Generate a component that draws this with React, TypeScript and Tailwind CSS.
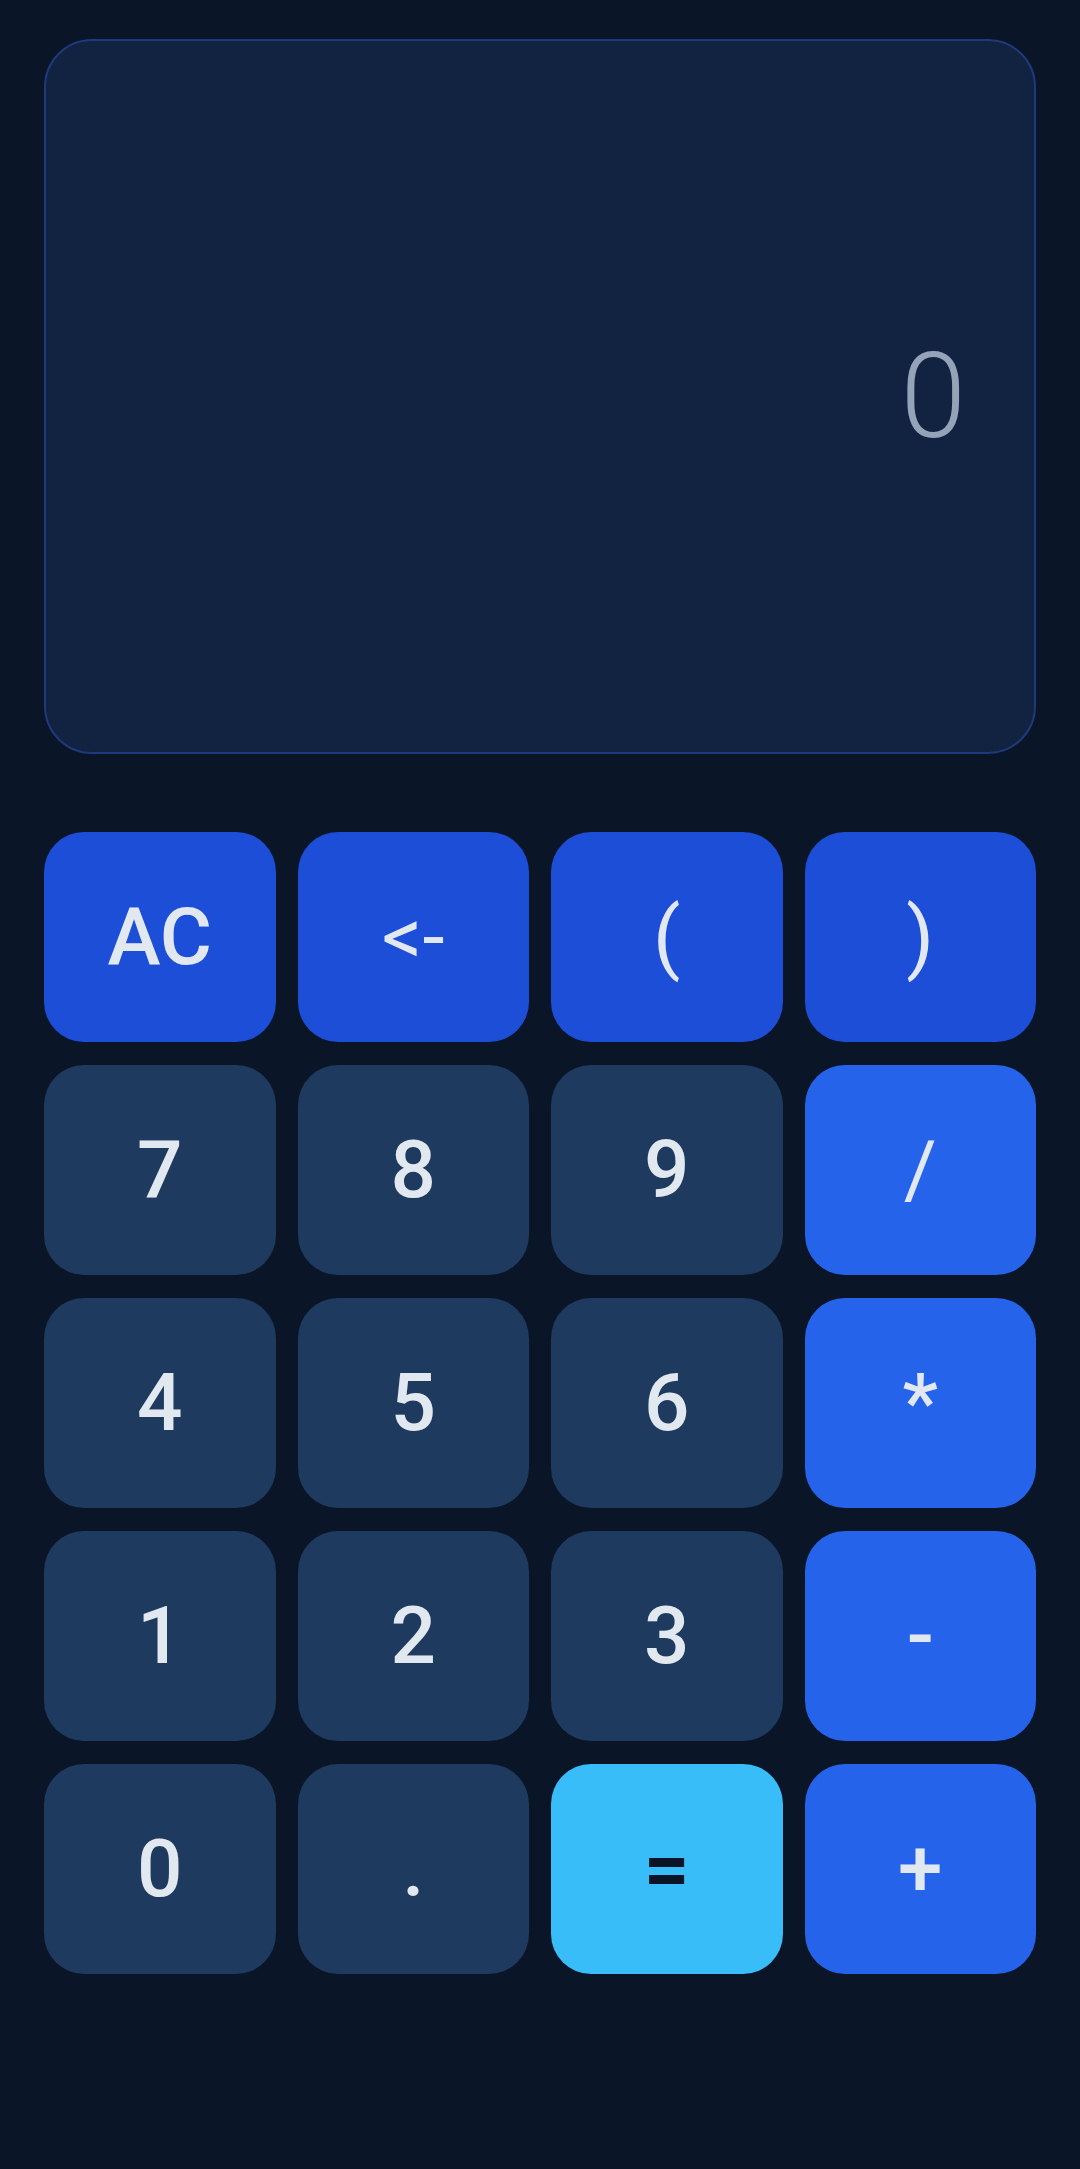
import { useState } from "react";

// Simple calculator: display panel on top, 4x5 keypad below.

type Key = { label: string; kind: "fn" | "num" | "op" | "eq"; thin?: boolean };

const KEYS: Key[] = [
  { label: "AC", kind: "fn" },
  { label: "<-", kind: "fn", thin: true },
  { label: "(", kind: "fn", thin: true },
  { label: ")", kind: "fn", thin: true },
  { label: "7", kind: "num" },
  { label: "8", kind: "num" },
  { label: "9", kind: "num" },
  { label: "/", kind: "op", thin: true },
  { label: "4", kind: "num" },
  { label: "5", kind: "num" },
  { label: "6", kind: "num" },
  { label: "*", kind: "op" },
  { label: "1", kind: "num" },
  { label: "2", kind: "num" },
  { label: "3", kind: "num" },
  { label: "-", kind: "op" },
  { label: "0", kind: "num" },
  { label: ".", kind: "num" },
  { label: "=", kind: "eq" },
  { label: "+", kind: "op" },
];

const KIND_CLASS: Record<Key["kind"], string> = {
  fn: "bg-[#1d4ed8] text-[#e2e8f0]",
  num: "bg-[#1e3a5f] text-[#e2e8f0]",
  op: "bg-[#2563eb] text-[#e2e8f0]",
  eq: "bg-[#38bdf8] text-[#0b1426]",
};

export default function App() {
  const [expr, setExpr] = useState("");

  function press(k: string) {
    if (k === "AC") return setExpr("");
    if (k === "<-") return setExpr((e) => e.slice(0, -1));
    if (k === "=") {
      try {
        // eslint-disable-next-line no-new-func
        const v = Function(`"use strict"; return (${expr || 0})`)();
        setExpr(String(v));
      } catch {
        setExpr("Error");
      }
      return;
    }
    setExpr((e) => (e === "Error" ? k : e + k));
  }

  return (
    <div
      className="min-h-screen bg-[#0a1527] px-[44px] pt-[39px]"
      style={{ fontFamily: "Roboto, 'Noto Sans', sans-serif" }}
    >
      <div className="flex h-[715px] items-center justify-end rounded-[48px] border-2 border-[#1f3a7c] bg-[#122241] px-[68px]">
        <span className="text-[118px] font-light leading-none text-[#94a3b8]">
          {expr || "0"}
        </span>
      </div>

      <div className="mt-[78px] grid grid-cols-4 gap-x-[22px] gap-y-[23px]">
        {KEYS.map((k) => (
          <button
            key={k.label}
            onClick={() => press(k.label)}
            className={`flex h-[210px] items-center justify-center rounded-[40px] text-[80px] leading-none ${KIND_CLASS[k.kind]} ${
              k.thin ? "font-normal" : k.kind === "eq" ? "font-bold" : "font-medium"
            }`}
          >
            {k.label}
          </button>
        ))}
      </div>
    </div>
  );
}
